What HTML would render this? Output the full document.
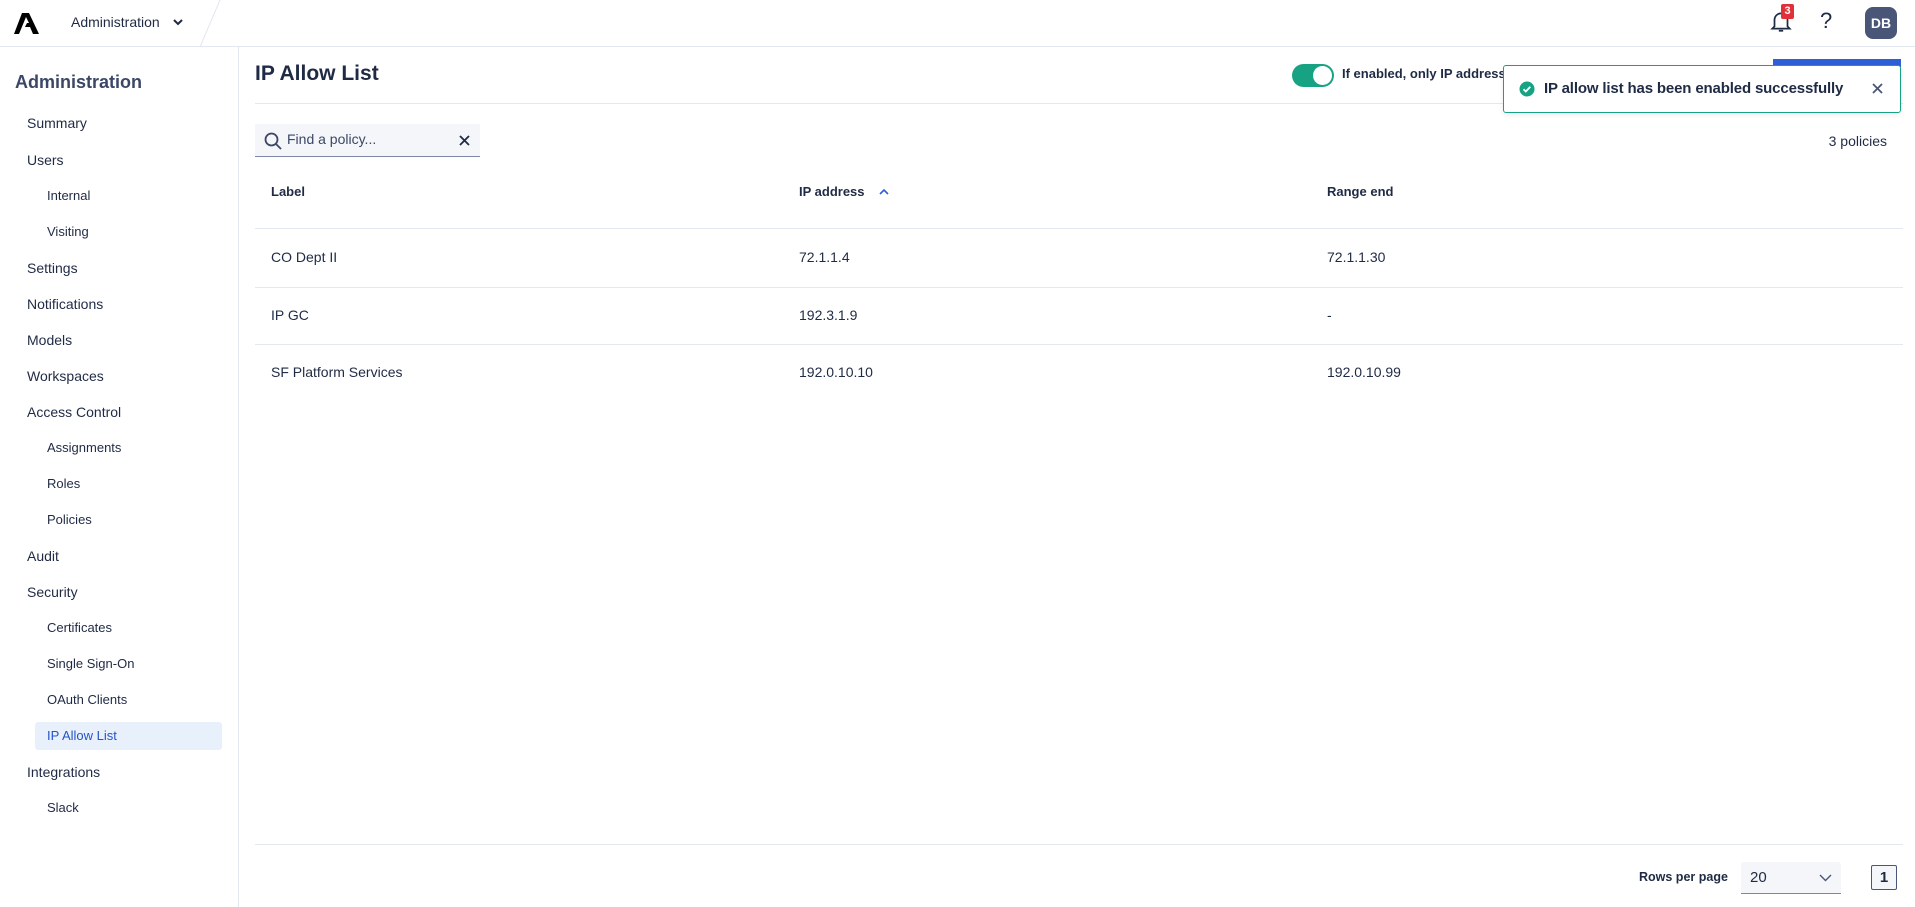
<!DOCTYPE html><html><head><style>
*{box-sizing:border-box;margin:0;padding:0}
body{width:1915px;height:907px;overflow:hidden;background:#fff;font-family:"Liberation Sans",sans-serif;color:#1f2a44;position:relative}
.a{position:absolute;white-space:nowrap}
.nav{font-size:14px;color:#1f2a44}
.sub{font-size:13px}
.td{font-size:14px;color:#1f2a44}
</style></head><body>
<div class="a" style="left:0;top:46px;width:1915px;height:1px;background:#e3e7ef"></div>
<svg class="a" style="left:14px;top:13px" width="25" height="21" viewBox="0 0 25 21"><path d="M8 0h7l10 21h-6l-3-7h-5l2-4h2l-3-6L5 21H0z" fill="#000"/></svg>
<div class="a" style="left:71px;top:14px;font-size:14px">Administration</div>
<svg class="a" style="left:173px;top:19px" width="10" height="7"><path d="M1 1l4 4 4-4" stroke="#1f2a44" stroke-width="2" fill="none"/></svg>
<svg class="a" style="left:198px;top:0" width="24" height="47"><path d="M22 0L2 47" stroke="#e3e7ef"/></svg>
<svg class="a" style="left:1768px;top:8px" width="26" height="26" viewBox="0 0 24 24"><path d="M6 17V11a6 6 0 0112 0v6l2 2H4zM10 21h4" stroke="#1f2a44" stroke-width="1.6" fill="none"/></svg>
<div class="a" style="left:1781px;top:4px;width:13px;height:15px;background:#e0303a;color:#fff;font-size:11px;font-weight:bold;text-align:center;line-height:15px;border-radius:2px">3</div>
<div class="a" style="left:1820px;top:8px;font-size:22px">?</div>
<div class="a" style="left:1865px;top:7px;width:32px;height:32px;border-radius:8px;background:#4a5677;color:#fff;font-weight:bold;font-size:14px;text-align:center;line-height:32px">DB</div>

<div class="a" style="left:238px;top:47px;width:1px;height:860px;background:#e3e7ef"></div>
<div class="a" style="left:15px;top:72px;font-size:18px;font-weight:bold;color:#3b4766">Administration</div>
<div class="a" style="left:35px;top:722px;width:187px;height:28px;background:#e8f0fb;border-radius:3px"></div>
<div class="a nav" style="left:27px;top:115px">Summary</div>
<div class="a nav" style="left:27px;top:152px">Users</div>
<div class="a nav sub" style="left:47px;top:188px">Internal</div>
<div class="a nav sub" style="left:47px;top:224px">Visiting</div>
<div class="a nav" style="left:27px;top:260px">Settings</div>
<div class="a nav" style="left:27px;top:296px">Notifications</div>
<div class="a nav" style="left:27px;top:332px">Models</div>
<div class="a nav" style="left:27px;top:368px">Workspaces</div>
<div class="a nav" style="left:27px;top:404px">Access Control</div>
<div class="a nav sub" style="left:47px;top:440px">Assignments</div>
<div class="a nav sub" style="left:47px;top:476px">Roles</div>
<div class="a nav sub" style="left:47px;top:512px">Policies</div>
<div class="a nav" style="left:27px;top:548px">Audit</div>
<div class="a nav" style="left:27px;top:584px">Security</div>
<div class="a nav sub" style="left:47px;top:620px">Certificates</div>
<div class="a nav sub" style="left:47px;top:656px">Single Sign-On</div>
<div class="a nav sub" style="left:47px;top:692px">OAuth Clients</div>
<div class="a nav sub" style="left:47px;top:728px;color:#2554c7">IP Allow List</div>
<div class="a nav" style="left:27px;top:764px">Integrations</div>
<div class="a nav sub" style="left:47px;top:800px">Slack</div>

<div class="a" style="left:255px;top:62px;font-size:21px;font-weight:bold;color:#1f2a44">IP Allow List</div>
<div class="a" style="left:255px;top:103px;width:1648px;height:1px;background:#e3e7ef"></div>
<div class="a" style="left:1292px;top:64px;width:42px;height:23px;border-radius:12px;background:#17a383"></div>
<div class="a" style="left:1313px;top:66px;width:19px;height:19px;border-radius:50%;background:#fff"></div>
<div class="a" style="left:1342px;top:66px;font-size:13px;font-weight:bold">If enabled, only IP address</div>
<div class="a" style="left:1773px;top:59px;width:128px;height:8px;background:#2e5fd6"></div>
<div class="a" style="left:1503px;top:65px;width:398px;height:48px;background:#fff;border:1px solid #17a383;border-radius:3px;box-shadow:0 2px 6px rgba(0,0,0,.08)"></div>
<svg class="a" style="left:1519px;top:81px" width="16" height="16"><circle cx="8" cy="8" r="7.5" fill="#17a383"/><path d="M4.5 8.2l2.3 2.3 4.5-4.7" stroke="#fff" stroke-width="1.8" fill="none"/></svg>
<div class="a" style="left:1544px;top:80px;font-size:15px;font-weight:bold;color:#1f2a44;letter-spacing:-0.15px">IP allow list has been enabled successfully</div>
<svg class="a" style="left:1872px;top:83px" width="11" height="11"><path d="M1 1l9 9M10 1l-9 9" stroke="#4a5677" stroke-width="1.8"/></svg>

<div class="a" style="left:255px;top:124px;width:225px;height:33px;background:#f5f6f9;border-bottom:1px solid #7c87a3"></div>
<svg class="a" style="left:264px;top:132px" width="18" height="18"><circle cx="7.5" cy="7.5" r="6" stroke="#3b4766" stroke-width="1.8" fill="none"/><path d="M12 12l5 5" stroke="#3b4766" stroke-width="1.8"/></svg>
<div class="a" style="left:287px;top:131px;font-size:14px;color:#3b4766">Find a policy...</div>
<svg class="a" style="left:459px;top:135px" width="11" height="11"><path d="M1 1l9 9M10 1l-9 9" stroke="#1f2a44" stroke-width="1.8"/></svg>
<div class="a" style="right:28px;top:133px;font-size:14px">3 policies</div>

<div class="a" style="left:271px;top:184px;font-size:13px;font-weight:bold">Label</div>
<div class="a" style="left:799px;top:184px;font-size:13px;font-weight:bold">IP address</div>
<svg class="a" style="left:879px;top:188px" width="10" height="7"><path d="M1 6l4-4 4 4" stroke="#2e5fd6" stroke-width="1.6" fill="none"/></svg>
<div class="a" style="left:1327px;top:184px;font-size:13px;font-weight:bold">Range end</div>
<div class="a" style="left:255px;top:228px;width:1648px;height:1px;background:#e3e7ef"></div>
<div class="a" style="left:255px;top:287px;width:1648px;height:1px;background:#e3e7ef"></div>
<div class="a" style="left:255px;top:344px;width:1648px;height:1px;background:#e3e7ef"></div>
<div class="a td" style="left:271px;top:249px">CO Dept II</div><div class="a td" style="left:799px;top:249px">72.1.1.4</div><div class="a td" style="left:1327px;top:249px">72.1.1.30</div>
<div class="a td" style="left:271px;top:307px">IP GC</div><div class="a td" style="left:799px;top:307px">192.3.1.9</div><div class="a td" style="left:1327px;top:307px">-</div>
<div class="a td" style="left:271px;top:364px">SF Platform Services</div><div class="a td" style="left:799px;top:364px">192.0.10.10</div><div class="a td" style="left:1327px;top:364px">192.0.10.99</div>

<div class="a" style="left:255px;top:844px;width:1648px;height:1px;background:#e3e7ef"></div>
<div class="a" style="left:1639px;top:870px;font-size:12.5px;font-weight:bold">Rows per page</div>
<div class="a" style="left:1741px;top:862px;width:100px;height:32px;background:#f5f6f9;border-bottom:1px solid #7c87a3;border-radius:3px 3px 0 0"></div>
<div class="a" style="left:1750px;top:869px;font-size:15px">20</div>
<svg class="a" style="left:1819px;top:874px" width="13" height="8"><path d="M1 1l5.5 5.5L12 1" stroke="#4a5677" stroke-width="1.4" fill="none"/></svg>
<div class="a" style="left:1871px;top:865px;width:26px;height:25px;border:1px solid #4a5677;border-radius:2px;background:#f5f6f9;text-align:center;line-height:23px;font-size:15px;font-weight:bold">1</div>
</body></html>
